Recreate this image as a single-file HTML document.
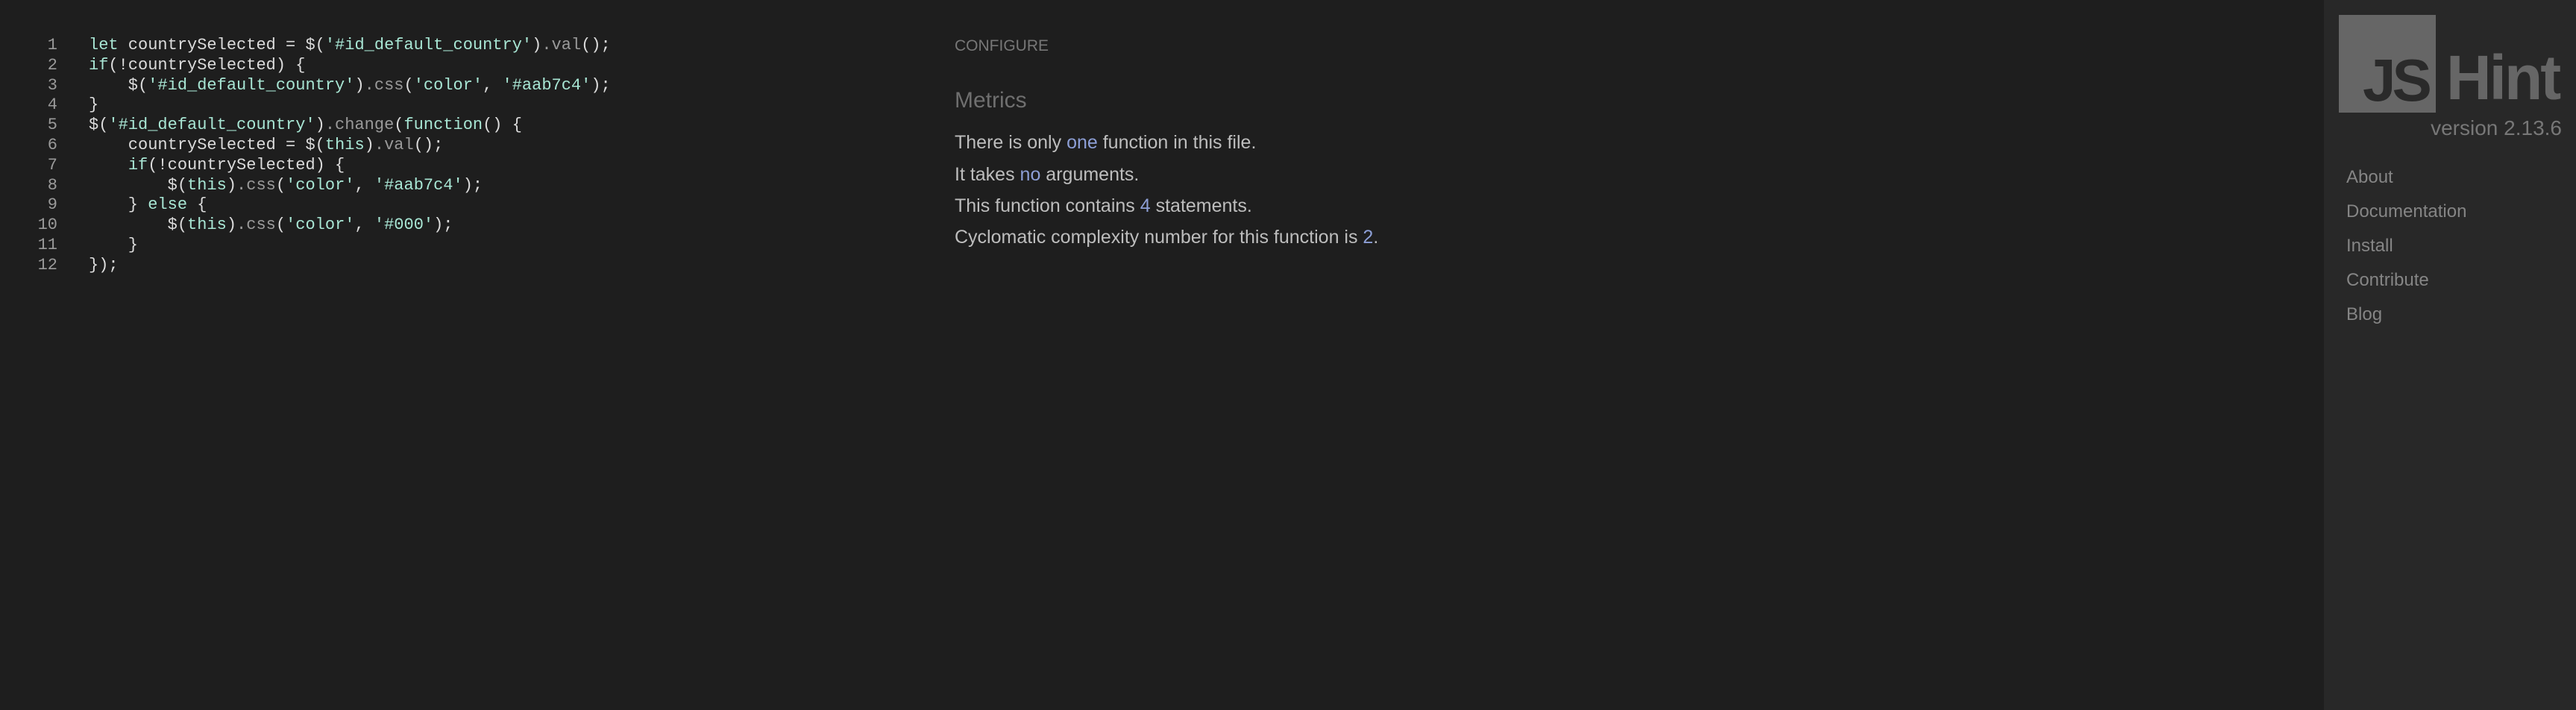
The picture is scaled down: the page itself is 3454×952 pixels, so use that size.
<!DOCTYPE html>
<html><head><meta charset="utf-8"><style>
html,body{margin:0;padding:0;width:3454px;height:952px;background:#1e1e1e;overflow:hidden;font-family:"Liberation Sans",Arial,sans-serif}
.code{position:absolute;left:0;top:48px;font-family:"Liberation Mono",monospace;font-size:22px;line-height:26.8px;color:#dcdcdc}
.ln{position:absolute;left:0;top:0;width:77px;text-align:right;color:#9a9a9a;white-space:pre}
.src{position:absolute;left:119px;top:0;white-space:pre}
.k{color:#a8e6d4}.m{color:#9a9a9a}
.t{position:absolute;left:1280px;white-space:nowrap}
.cfg{font-size:21px;color:#777;top:50px}
.met{font-size:30px;color:#6f6f6f;top:118px}
.p{font-size:25px;color:#bdbdbd}
.h{color:#8d9fd6}
.side{position:absolute;left:3116px;top:0;width:338px;height:952px;background:#282828}
.box{position:absolute;left:3136px;top:20px;width:130px;height:131px;background:#666}
.js{position:absolute;left:3168px;top:58px;font-weight:bold;font-size:80px;color:#2a2a2a;letter-spacing:-5px;line-height:100px}
.hint{position:absolute;left:3280px;top:54px;font-weight:bold;font-size:84px;color:#666;letter-spacing:-3px;line-height:100px}
.ver{position:absolute;right:19px;top:156px;font-size:28px;color:#777}
.nav{position:absolute;left:3146px;font-size:24px;color:#858585}
</style></head><body>
<div class="code"><div class="ln">1
2
3
4
5
6
7
8
9
10
11
12</div><div class="src"><span class="k">let</span> countrySelected = $(<span class="k">'#id_default_country'</span>)<span class="m">.val</span>();
<span class="k">if</span>(!countrySelected) {
    $(<span class="k">'#id_default_country'</span>)<span class="m">.css</span>(<span class="k">'color'</span>, <span class="k">'#aab7c4'</span>);
}
$(<span class="k">'#id_default_country'</span>)<span class="m">.change</span>(<span class="k">function</span>() {
    countrySelected = $(<span class="k">this</span>)<span class="m">.val</span>();
    <span class="k">if</span>(!countrySelected) {
        $(<span class="k">this</span>)<span class="m">.css</span>(<span class="k">'color'</span>, <span class="k">'#aab7c4'</span>);
    } <span class="k">else</span> {
        $(<span class="k">this</span>)<span class="m">.css</span>(<span class="k">'color'</span>, <span class="k">'#000'</span>);
    }
});</div></div>
<div class="t cfg">CONFIGURE</div>
<div class="t met">Metrics</div>
<div class="t p" style="top:177px">There is only <span class="h">one</span> function in this file.</div>
<div class="t p" style="top:220px">It takes <span class="h">no</span> arguments.</div>
<div class="t p" style="top:262px">This function contains <span class="h">4</span> statements.</div>
<div class="t p" style="top:304px">Cyclomatic complexity number for this function is <span class="h">2</span>.</div>
<div class="side"></div>
<div class="box"></div>
<div class="js">JS</div>
<div class="hint">Hint</div>
<div class="ver">version 2.13.6</div>
<div class="nav" style="top:224px">About</div>
<div class="nav" style="top:270px">Documentation</div>
<div class="nav" style="top:316px">Install</div>
<div class="nav" style="top:362px">Contribute</div>
<div class="nav" style="top:408px">Blog</div>
</body></html>
